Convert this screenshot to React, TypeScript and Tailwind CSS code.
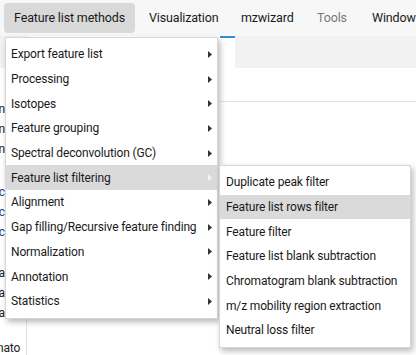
import React from "react";

const mainItems = [
  "Export feature list",
  "Processing",
  "Isotopes",
  "Feature grouping",
  "Spectral deconvolution (GC)",
  "Feature list filtering",
  "Alignment",
  "Gap filling/Recursive feature finding",
  "Normalization",
  "Annotation",
  "Statistics",
];

const subItems = [
  "Duplicate peak filter",
  "Feature list rows filter",
  "Feature filter",
  "Feature list blank subtraction",
  "Chromatogram blank subtraction",
  "m/z mobility region extraction",
  "Neutral loss filter",
];

function Arrow({ light }: { light?: boolean }) {
  return (
    <svg width="4" height="7" viewBox="0 0 4 7" className="shrink-0">
      <path d="M0 0 L4 3.5 L0 7 Z" fill={light ? "#f2f2f2" : "#333333"} />
    </svg>
  );
}

function Frag({ t, c }: { t: string; c: string }) {
  return (
    <div className={`flex justify-end w-[5px] h-[20px] overflow-hidden leading-[20px] ${c}`}>
      <span className="whitespace-nowrap">{t}</span>
    </div>
  );
}

export default function App() {
  return (
    <div
      className="relative w-[416px] h-[355px] overflow-hidden bg-white text-[12px] tracking-[-0.15px] text-[#1a1a1a]"
      style={{ fontFamily: 'Roboto, "Noto Sans", sans-serif' }}
    >
      {/* menu bar */}
      <div className="flex items-center h-[36px] bg-[#f7f7f7] pl-[4px] whitespace-nowrap text-[12.5px]">
        <div className="shrink-0 flex items-center justify-center w-[131px] h-[30px] rounded-[4px] bg-[#d9d9d9]">
          Feature list methods
        </div>
        <div className="shrink-0 ml-[14px] w-[92px]">Visualization</div>
        <div className="shrink-0 w-[76px]">mzwizard</div>
        <div className="shrink-0 w-[55px] text-[#777]">Tools</div>
        <div className="shrink-0">Windows</div>
      </div>

      {/* background content */}
      <div className="flex h-[319px]">
        {/* left tree panel */}
        <div className="flex flex-col w-[27px] border-r border-[#e2e2e2]">
          <div className="h-[32px] bg-[#f2f2f2]" />
          <div className="flex flex-col pt-[31px]">
            <Frag t="n" c="text-[#222]" />
            <Frag t="n" c="text-[#222]" />
            <Frag t="n" c="text-[#222]" />
            <div className="h-[23px]" />
            <Frag t="c" c="text-[#2a4a7a]" />
            <Frag t="c" c="text-[#2a4a7a]" />
            <Frag t="c" c="text-[#2a4a7a]" />
            <div className="h-[21px]" />
            <Frag t="a" c="text-[#222]" />
            <Frag t="a" c="text-[#222]" />
            <Frag t="a" c="text-[#222]" />
          </div>
          <div className="mt-auto h-[20px] flex items-end overflow-hidden">
            <span className="ml-[-3px] leading-[14px] text-[#222]">nato</span>
          </div>
        </div>
        <div className="flex-1 flex flex-col">
          <div className="flex h-[32px]">
            <div className="w-[208px] flex flex-col">
              <div className="ml-[193px] w-[15px] h-[2px] bg-[#2f8fd0]" />
            </div>
            <div className="flex-1 bg-[#f2f2f2]" />
          </div>
          <div className="h-[33px]" />
          <div className="ml-[193px] h-[1px] bg-[#e2e2e2]" />
        </div>
      </div>

      {/* main dropdown */}
      <div className="absolute left-[5px] top-[37px] w-[213px] py-[4px] bg-white border border-[#d6d6d6] shadow-[2px_3px_6px_rgba(0,0,0,0.28)]">
        {mainItems.map((it, i) => {
          const active = i === 5;
          return (
            <div
              key={it}
              className={`flex items-center h-[24.7px] pl-[5px] pr-[5px] ${active ? "bg-[#dadada]" : ""}`}
            >
              <span className="flex-1 whitespace-nowrap">{it}</span>
              <Arrow light={active} />
            </div>
          );
        })}
      </div>

      {/* submenu */}
      <div className="absolute left-[219px] top-[165px] w-[192px] py-[4px] bg-white border border-[#d6d6d6] shadow-[2px_3px_6px_rgba(0,0,0,0.28)]">
        {subItems.map((it, i) => (
          <div
            key={it}
            className={`flex items-center h-[24.7px] pl-[6px] ${i === 1 ? "bg-[#dadada]" : ""}`}
          >
            <span className="whitespace-nowrap">{it}</span>
          </div>
        ))}
      </div>
    </div>
  );
}
